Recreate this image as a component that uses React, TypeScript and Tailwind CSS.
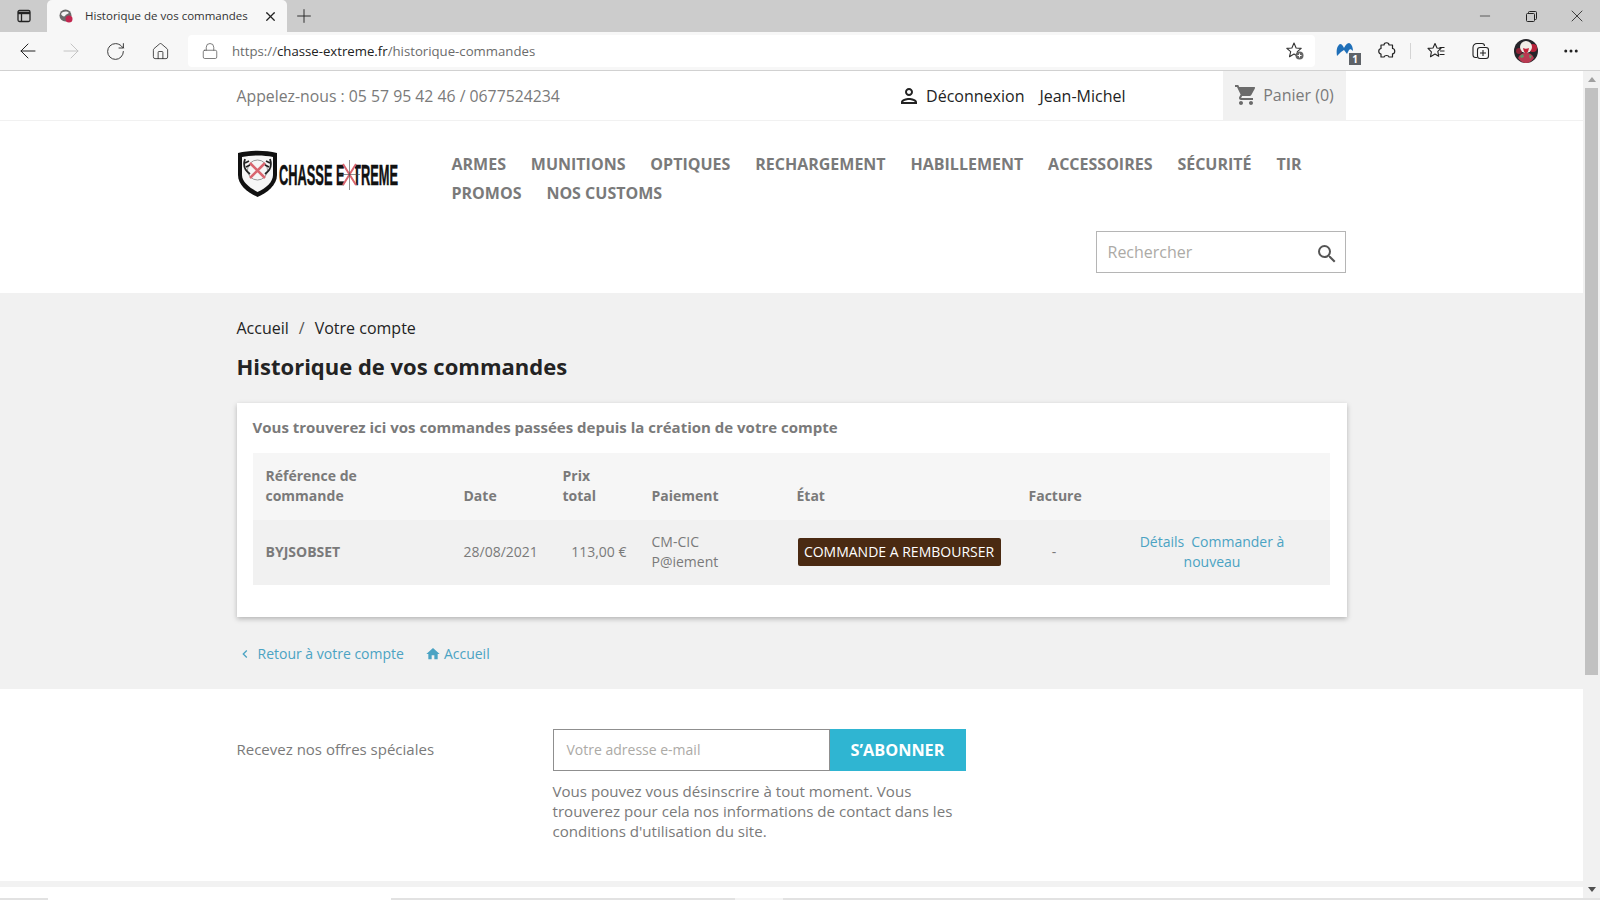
import { ArrowLeft, ArrowRight, Ellipsis, House, Lock, Minus, Plus, RotateCw, X } from "lucide-react";
import { MdChevronLeft, MdHome, MdOutlinePerson, MdSearch, MdShoppingCart } from "react-icons/md";

const navRows = [
  ["ARMES", "MUNITIONS", "OPTIQUES", "RECHARGEMENT", "HABILLEMENT", "ACCESSOIRES", "SÉCURITÉ", "TIR"],
  ["PROMOS", "NOS CUSTOMS"],
];

function TabFavicon() {
  return (
    <svg width="16" height="16" viewBox="0 0 16 16">
      <circle cx="7.5" cy="7.5" r="6" fill="#6b6b6b" />
      <path d="M3 6c2-3 6-3 8-1-1 1-3 1-4 3-1 1-3 0-4-2z" fill="#f4f4f4" />
      <circle cx="11" cy="11" r="3.5" fill="#c2264f" />
    </svg>
  );
}

function ProfileAvatar() {
  return (
    <svg width="24" height="24" viewBox="0 0 24 24">
      <circle cx="12" cy="12" r="12" fill="#26252a" />
      <path d="M4 19c2-4 4-5 8-5s6 1 8 5c-2 3-5 5-8 5s-6-2-8-5z" fill="#b93a52" />
      <circle cx="19" cy="9" r="4" fill="#b8223a" />
      <circle cx="5" cy="12" r="3" fill="#8d2236" />
      <circle cx="12" cy="8" r="6" fill="#f1ece6" />
      <path d="M9 9c2 1 4 1 6 0-.5 3-1.500 5-3 5s-2.500-2-3-5z" fill="#c41f38" />
      <path d="M6 17l3-2 1 3-3 1zM15 16l3 1-2 3z" fill="#5e9b6c" />
    </svg>
  );
}

function CollectionsIcon() {
  return (
    <svg width="20" height="20" viewBox="0 0 20 20" fill="none" stroke="#222" strokeWidth="1.100">
      <path d="M6 16.500H4.500A2.500 2.500 0 0 1 2 14V6.500A4 4 0 0 1 6 2.500h5A2.500 2.500 0 0 1 13.500 5" />
      <rect x="6.500" y="6.500" width="11" height="11" rx="2.500" />
      <path d="M12 9v6M9 12h6" />
    </svg>
  );
}

function FavoritesIcon() {
  return (
    <svg width="20" height="20" viewBox="0 0 20 20" fill="none" stroke="#222" strokeWidth="1.100">
      <path d="M8 2.500l2 4.500 4 .4-3.200 3 .9 4.800L8 13l-4.500 2.700.9-4.800L1 7.400l5-.4z" strokeLinejoin="round" />
      <path d="M12.500 6.500h5M13 10h4.500M12.500 13.500h5" />
    </svg>
  );
}

function ExtensionIcon() {
  return (
    <svg width="20" height="20" viewBox="0 0 20 20" fill="none" stroke="#222" strokeWidth="1.200" strokeLinejoin="round">
      <path d="M7 4c0-3 5-3 5 0h3.500v3.500c3 .3 3 5 0 5.300V16H12c-.3-2-4.500-2-5 0H4v-3c-3-.5-3-5 0-5.500V4z" />
    </svg>
  );
}

function StarAddIcon() {
  return (
    <svg width="21" height="21" viewBox="0 0 21 21">
      <path d="M9 2l2.100 5 5.100.4-3.900 3.300 1.200 5L9 13l-4.500 2.700 1.200-5-3.900-3.300 5.100-.4z" fill="none" stroke="#333" strokeWidth="1.100" strokeLinejoin="round" />
      <circle cx="14.500" cy="14.500" r="4" fill="#666" />
      <path d="M14.500 12.500v4M12.500 14.500h4" stroke="#fff" strokeWidth="1" />
    </svg>
  );
}

function MalwarebytesIcon() {
  return (
    <div className="relative h-[24px] w-[24px]">
      <svg width="18" height="16" viewBox="0 0 18 16" className="absolute left-0 top-[3px]">
        <path d="M1 14C0 8 1 4 4 2c2 0 3 2 4 4 1-2 3-5 5-5 3 1 4 5 4 8-2-2-3-2-4-1l-2 4-3-4-3 2z" fill="#1f6fb8" />
      </svg>
      <div className="absolute bottom-[-2px] right-[-1px] flex h-[12px] w-[12px] items-center justify-center bg-[#5f6368] text-[10px] font-bold leading-none text-white">1</div>
    </div>
  );
}

function TabStripIcon() {
  return (
    <svg width="16" height="16" viewBox="0 0 16 16" fill="none" stroke="#222" strokeWidth="1.300">
      <rect x="2" y="2.500" width="12" height="11" rx="1.500" />
      <path d="M2 5h12" strokeWidth="2.400" />
      <path d="M5.500 5v8.500" />
    </svg>
  );
}

function RestoreIcon() {
  return (
    <svg width="11" height="11" viewBox="0 0 11 11" fill="none" stroke="#222" strokeWidth="1">
      <rect x="0.500" y="2.500" width="8" height="8" rx="1" />
      <path d="M2.500 2.500v-1a1 1 0 0 1 1-1h6a1 1 0 0 1 1 1v6a1 1 0 0 1-1 1h-1" />
    </svg>
  );
}

function BrowserChrome() {
  return (
    <div className="shrink-0">
      <div className="flex h-[32px] items-end bg-[#cccccc]">
        <div className="flex h-[32px] w-[47px] items-center justify-center pb-[1px]">
          <TabStripIcon />
        </div>
        <div className="flex h-[32px] w-[240px] items-center rounded-t-[5px] bg-[#f7f7f7] pl-[11px] pr-[9px]">
          <TabFavicon />
          <span className="ml-[11px] flex-1 whitespace-nowrap text-[11.5px] text-[#333]">Historique de vos commandes</span>
          <X size={15} strokeWidth={2} color="#222" />
        </div>
        <div className="flex h-[32px] w-[34px] items-center justify-center">
          <Plus size={22} strokeWidth={1} color="#222" />
        </div>
        <div className="ml-auto flex h-[32px] items-center">
          <div className="flex w-[46px] justify-center"><Minus size={16} strokeWidth={1} color="#222" /></div>
          <div className="flex w-[46px] justify-center"><RestoreIcon /></div>
          <div className="flex w-[46px] justify-center"><X size={20} strokeWidth={1} color="#222" /></div>
        </div>
      </div>
      <div className="flex h-[39px] items-center border-b border-[#d2d2d2] bg-[#f7f7f7]">
        <div className="flex w-[188px] items-center">
          <div className="flex w-[56px] justify-center"><ArrowLeft size={24} strokeWidth={1} color="#222" /></div>
          <div className="flex w-[30px] justify-center"><ArrowRight size={24} strokeWidth={1} color="#c4c4c4" /></div>
          <div className="flex w-[58px] justify-center"><RotateCw size={21} strokeWidth={1} color="#222" /></div>
          <div className="ml-[1px] flex w-[30px] justify-center"><House size={19} strokeWidth={1} color="#222" /></div>
        </div>
        <div className="flex h-[32px] w-[1127px] items-center rounded-[4px] bg-white pl-[13px] pr-[9px] text-[13.2px] text-[#6b6b6b]">
          <Lock size={18} strokeWidth={1} color="#555" />
          <span className="ml-[13px] flex-1 pt-[1px]">
            https://<span className="text-[#222]">chasse-extreme.fr</span>/historique-commandes
          </span>
          <StarAddIcon />
        </div>
        <div className="ml-[21px]"><MalwarebytesIcon /></div>
        <div className="ml-[17px]"><ExtensionIcon /></div>
        <div className="ml-[13px] h-[16px] w-px bg-[#d4d4d4]" />
        <div className="ml-[16px]"><FavoritesIcon /></div>
        <div className="ml-[24px]"><CollectionsIcon /></div>
        <div className="ml-[23px]"><ProfileAvatar /></div>
        <div className="ml-[24px]"><Ellipsis size={18} strokeWidth={2} color="#222" /></div>
      </div>
    </div>
  );
}

function Logo() {
  return (
    <svg width="164" height="48" viewBox="0 0 164 48" className="shrink-0 overflow-visible">
      <path d="M1 3c12-3 27-3 39 0v22c0 10-10 18-19.500 22C11 43 1 35 1 25z" fill="#111" />
      <path d="M5 7c9-2 22-2 31 0v18c0 7-7 13-15.500 17C13 38 5 32 5 25z" fill="#f6f6f6" />
      <circle cx="20.500" cy="20" r="10" fill="none" stroke="#999" strokeWidth="1" />
      <path d="M13 13l15 15M28 13L13 28" stroke="#d9666f" strokeWidth="2.500" />
      <path d="M8 9c-2 6-1 11 5 15M8 13l4-2M9 17l4-2M33 9c2 6 1 11-5 15M33 13l-4-2M32 17l-4-2" fill="none" stroke="#222" strokeWidth="1.800" />
      <text x="42" y="35" textLength="119" lengthAdjust="spacingAndGlyphs" fontFamily="'Liberation Sans', sans-serif" fontWeight="700" fontSize="30" stroke="#111" strokeWidth="0.500" fill="#111">CHASSE EXTREME</text>
      <rect x="107" y="13" width="11" height="23" fill="#fff" />
      <path d="M106 14l13 21M119 14l-13 21" stroke="#d9666f" strokeWidth="2" />
      <path d="M112.500 10v30M102 24.500h21" stroke="#444" strokeWidth="0.600" />
    </svg>
  );
}

function SiteHeader() {
  return (
    <header className="bg-white shadow-[0_2px_3px_rgba(0,0,0,0.08)]">
      <div className="border-b border-[#f1f1f1]">
        <div className="mx-auto flex h-[49px] w-[1110px] items-center pr-[1px]">
          <span className="pt-[2px] text-[15.8px] text-[#7a7a7a]">Appelez-nous : 05 57 95 42 46 / 0677524234</span>
          <div className="ml-auto flex items-center pt-[1px] text-[16px] text-[#232323]">
            <MdOutlinePerson size={24} className="mr-[5px]" />
            <span>Déconnexion</span>
            <span className="ml-[15px]">Jean-Michel</span>
          </div>
          <div className="ml-[97px] flex h-[49px] w-[123px] items-center justify-center gap-[5px] bg-[#f1f1f1] pb-[2px] text-[16px] text-[#7a7a7a]">
            <MdShoppingCart size={24} color="#6b6b6b" />
            <span>Panier (0)</span>
          </div>
        </div>
      </div>
      <div className="mx-auto h-[172px] w-[1110px] pr-[1px]">
        <div className="flex pt-[29px]">
          <div className="w-[215px]">
            <Logo />
          </div>
          <nav className="text-[16px] font-bold leading-[29px] text-[#7a7a7a]">
            {navRows.map((row) => (
              <div key={row[0]} className="flex gap-[24.9px]">
                {row.map((item) => (
                  <span key={item}>{item}</span>
                ))}
              </div>
            ))}
          </nav>
        </div>
        <div className="mt-[23px] flex justify-end">
          <div className="flex h-[42px] w-[250px] items-center border border-[#b5b5b5] pl-[11px] pr-[6px] text-[16px] text-[#acaaa6]">
            <span className="flex-1">Rechercher</span>
            <MdSearch size={24} color="#555" className="mt-[4px]" />
          </div>
        </div>
      </div>
    </header>
  );
}

function OrdersTable() {
  return (
    <table className="w-[1077px] table-fixed border-collapse text-[14px] text-[#7a7a7a]">
      <colgroup>
        <col className="w-[198px]" />
        <col className="w-[99px]" />
        <col className="w-[89px]" />
        <col className="w-[145px]" />
        <col className="w-[232px]" />
        <col className="w-[85px]" />
        <col />
      </colgroup>
      <thead className="bg-[#f6f6f6] font-bold">
        <tr className="h-[67px] align-bottom leading-[20px]">
          <th className="px-[13px] pb-[14px] text-left font-bold">Référence de commande</th>
          <th className="px-[13px] pb-[14px] text-left font-bold">Date</th>
          <th className="px-[13px] pb-[14px] text-left font-bold">Prix total</th>
          <th className="px-[13px] pb-[14px] text-left font-bold">Paiement</th>
          <th className="px-[13px] pb-[14px] text-left font-bold">État</th>
          <th className="px-[13px] pb-[14px] text-left font-bold">Facture</th>
          <th />
        </tr>
      </thead>
      <tbody className="bg-[#f1f1f1]">
        <tr className="h-[65px] leading-[20px]">
          <td className="px-[13px] pb-[2px] font-bold">BYJSOBSET</td>
          <td className="px-[13px] pb-[2px]">28/08/2021</td>
          <td className="pb-[2px] pr-[12px] text-right">113,00 €</td>
          <td className="px-[13px] pb-[2px]">CM-CIC<br />P@iement</td>
          <td className="px-[14px] pb-[2px]">
            <span className="inline-flex h-[28px] w-[203px] items-center justify-center rounded-[2px] bg-[#4a2a12] text-[14px] text-white">COMMANDE A REMBOURSER</span>
          </td>
          <td className="pb-[2px] pr-[8px] text-center">-</td>
          <td className="pb-[2px] pl-[14px] pr-[20px] text-center text-[#4ba3c3]">
            <span>Détails</span>
            <span className="ml-[7px]">Commander à nouveau</span>
          </td>
        </tr>
      </tbody>
    </table>
  );
}

function MainContent() {
  return (
    <main className="bg-[#f1f1f1] pt-[23px]">
      <div className="mx-auto h-[373px] w-[1110px]">
        <div className="flex gap-[10px] text-[16px] leading-[24px] text-[#232323]">
          <span>Accueil</span>
          <span className="text-[#555]">/</span>
          <span>Votre compte</span>
        </div>
        <h1 className="mt-[11px] text-[22px] font-bold leading-[30px] text-[#232323]">Historique de vos commandes</h1>
        <section className="mt-[22px] h-[214px] w-[1110px] bg-white pl-[16px] pt-[14px] shadow-[0_2px_5px_rgba(0,0,0,0.25)]">
          <p className="text-[15px] font-bold leading-[20px] text-[#7a7a7a]">Vous trouverez ici vos commandes passées depuis la création de votre compte</p>
          <div className="mt-[16px]">
            <OrdersTable />
          </div>
        </section>
        <div className="mt-[27px] flex items-center text-[14px] leading-[20px] text-[#4ba3c3]">
          <MdChevronLeft size={16} className="mr-[5px]" />
          <span>Retour à votre compte</span>
          <MdHome size={16} className="ml-[21px] mr-[3px]" />
          <span>Accueil</span>
        </div>
      </div>
    </main>
  );
}

function NewsletterFooter() {
  return (
    <footer className="flex-1 bg-white">
      <div className="mx-auto flex w-[1110px] pt-[40px]">
        <div className="flex h-[42px] w-[316px] items-center pb-[2px] text-[15px] text-[#7a7a7a]">Recevez nos offres spéciales</div>
        <div className="w-[413px]">
          <div className="flex h-[42px]">
            <div className="flex w-[277px] items-center border border-[#8f8f8f] bg-white pb-[2px] pl-[13px] text-[14px] text-[#acaaa6]">Votre adresse e-mail</div>
            <div className="flex w-[136px] items-center justify-center bg-[#2fb5d2] text-[16.3px] font-bold text-white">S’ABONNER</div>
          </div>
          <p className="mt-[10px] w-[414px] text-[15.1px] leading-[20px] text-[#7a7a7a]">Vous pouvez vous désinscrire à tout moment. Vous trouverez pour cela nos informations de contact dans les conditions d'utilisation du site.</p>
        </div>
      </div>
    </footer>
  );
}

function PageScrollbar() {
  return (
    <div className="flex w-[17px] shrink-0 flex-col items-center bg-[#f1f1f1]">
      <div className="flex h-[17px] items-center justify-center">
        <div className="h-0 w-0 border-x-[4px] border-b-[5px] border-x-transparent border-b-[#a0a0a0]" />
      </div>
      <div className="h-[587px] w-[13px] bg-[#c1c1c1]" />
      <div className="flex-1" />
      <div className="flex h-[17px] items-center justify-center">
        <div className="h-0 w-0 border-x-[4px] border-t-[5px] border-x-transparent border-t-[#505050]" />
      </div>
    </div>
  );
}

export default function App() {
  return (
    <div className="flex h-screen w-full flex-col overflow-hidden bg-white font-['Open_Sans',sans-serif]">
      <BrowserChrome />
      <div className="flex min-h-0 flex-1">
        <div className="flex min-w-0 flex-1 flex-col">
          <SiteHeader />
          <MainContent />
          <NewsletterFooter />
          <div className="h-[6px] shrink-0 bg-[#f2f2f2]" />
          <div className="h-[11px] shrink-0 bg-white" />
        </div>
        <PageScrollbar />
      </div>
      <div className="flex h-[2px] shrink-0 bg-[#e2e2e2]">
        <div className="ml-[48px] w-[343px] bg-white" />
        <div className="ml-[344px] w-[48px] bg-[#f4f4f4]" />
      </div>
    </div>
  );
}
